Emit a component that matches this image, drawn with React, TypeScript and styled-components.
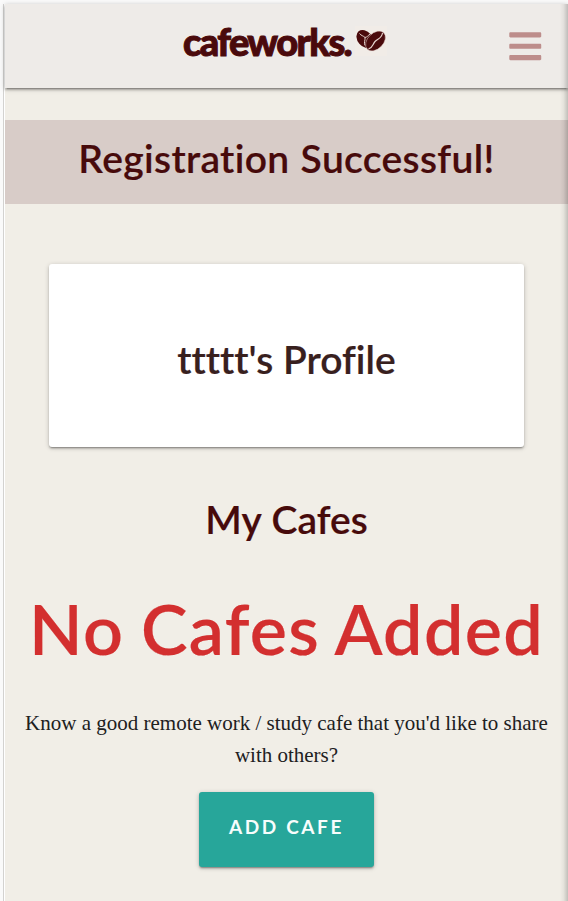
import React from "react";
import styled, { createGlobalStyle } from "styled-components";
import { FaBars } from "react-icons/fa";

const GlobalStyle = createGlobalStyle`
  *, *::before, *::after { box-sizing: border-box; }
  html { background: #f9f9f9; }
  body { margin: 0; overflow: hidden; }
  h1, h2, h3, p { margin: 0; font-weight: inherit; }
`;

const Frame = styled.div`
  height: 901px;
  padding: 4px 0 0 3px;
  background: #fafafa;
`;

const Page = styled.div`
  position: relative;
  height: 897px;
  border-left: 1px solid #d3d2d0;
  box-shadow: inset 1px 0 0 #fff;
  padding-left: 1px;
  background: #f1eee7;
  display: flex;
  flex-direction: column;
  align-items: center;
`;

const EdgeShade = styled.div`
  position: absolute;
  top: 0;
  right: 0;
  bottom: 0;
  width: 8px;
  background: linear-gradient(to right, rgba(0, 0, 0, 0), rgba(0, 0, 0, 0.05) 45%, rgba(0, 0, 0, 0.2));
`;

const NavBar = styled.header`
  flex: none;
  width: 100%;
  height: 84px;
  display: grid;
  grid-template-columns: 1fr auto 1fr;
  align-items: center;
  background: #eeebe8;
  box-shadow: 0 2px 2px 0 rgba(0, 0, 0, 0.2), 0 3px 1px -2px rgba(0, 0, 0, 0.16), 0 1px 5px 0 rgba(0, 0, 0, 0.25);
`;

const Brand = styled.a`
  grid-column: 2;
  display: flex;
  align-items: center;
  gap: 4px;
  color: #4a0a0c;
  height: 40px;
  margin: -10px 0 0 -3px;
`;

const BrandName = styled.span`
  font: 900 38px/40px Lato, sans-serif;
  font-variant-ligatures: none;
  letter-spacing: -1.6px;
  -webkit-text-stroke: 1px #4a0a0c;
`;

const BeanIcon = styled.svg`
  width: 32px;
  height: 30px;
  background: #f1ece7;
`;

const MenuButton = styled.button`
  justify-self: end;
  border: 0;
  padding: 0;
  margin: 0 25px 0 0;
  background: none;
  display: flex;
  color: #bd8d8b;
  font-size: 36.5px;
`;

const Banner = styled.div`
  flex: none;
  width: 100%;
  height: 84px;
  margin-top: 32px;
  display: flex;
  justify-content: center;
  background: #d8ccc8;
`;

const Heading = styled.h2<{ $size?: number; $color?: string; $track?: number; $word?: number; $shift?: number }>`
  font-family: Lato, sans-serif;
  font-weight: 600;
  font-variant-ligatures: none;
  font-size: ${p => p.$size ?? 39}px;
  line-height: 84px;
  white-space: nowrap;
  color: ${p => p.$color ?? "#470a0b"};
  letter-spacing: ${p => p.$track ?? 0}px;
  word-spacing: ${p => p.$word ?? 0}px;
  margin-top: ${p => p.$shift ?? 0}px;
  -webkit-text-stroke: 0.2px currentColor;
`;

const raised = "0 2px 2px 0 rgba(0,0,0,.14), 0 3px 1px -2px rgba(0,0,0,.12), 0 1px 5px 0 rgba(0,0,0,.2), 0 1px 1px rgba(0,0,0,.1)";

const Card = styled.section`
  flex: none;
  width: 475px;
  height: 183px;
  margin-top: 60px;
  border-radius: 3px;
  background: #fff;
  box-shadow: ${raised};
  display: flex;
  align-items: center;
  justify-content: center;
`;

const Prompt = styled.p`
  width: 540px;
  height: 64px;
  margin-top: 37px;
  text-align: center;
  font: 21px/32px "Liberation Serif", serif;
  color: #20201d;
`;

const AddButton = styled.button`
  flex: none;
  width: 175px;
  height: 75px;
  margin-top: 21px;
  border: 0;
  border-radius: 3px;
  padding: 0 0 5px 0;
  background: #27a69a;
  color: #f7fdfc;
  font: 700 19px/24px Lato, sans-serif;
  letter-spacing: 2.6px;
  box-shadow: ${raised};
`;

export default function App() {
  return (
    <>
      <GlobalStyle />
      <Frame>
        <Page>
          <NavBar>
            <Brand>
              <BrandName>cafeworks.</BrandName>
              <BeanIcon viewBox="0 0 32 30" fill="none">
                <ellipse cx="10" cy="13" rx="10" ry="7.4" transform="rotate(50 10 13)" fill="#4a0a0c" />
                <path d="M4.5 7.5C6.5 10 8 9.5 10 11.5C10.5 14 8.5 16.5 10 19.5M10 11.5C12.5 11 13 9.5 15 8" stroke="#e5d3ce" strokeWidth="1" />
                <ellipse cx="20.5" cy="15" rx="11.6" ry="7.9" transform="rotate(-45 20.5 15)" fill="#4a0a0c" stroke="#e5d3ce" strokeWidth="0.5" />
                <path d="M27.5 7C26.5 13 22.5 12.5 20 15.5C17.5 18.5 18 21.5 13.5 23" stroke="#e5d3ce" strokeWidth="1.2" />
              </BeanIcon>
            </Brand>
            <MenuButton aria-label="Menu"><FaBars /></MenuButton>
          </NavBar>
          <Banner>
            <Heading as="h1" $shift={-4} $track={0.35} $word={1}>Registration Successful!</Heading>
          </Banner>
          <Card>
            <Heading $color="#38201e" $shift={7}>ttttt's Profile</Heading>
          </Card>
          <Heading $shift={30} $word={1}>My Cafes</Heading>
          <Heading $size={70} $color="#d32f2f" $shift={25} $track={1.3} $word={-2}>No Cafes Added</Heading>
          <Prompt>Know a good remote work / study cafe that you'd like to share with others?</Prompt>
          <AddButton>ADD CAFE</AddButton>
          <EdgeShade />
        </Page>
      </Frame>
    </>
  );
}
